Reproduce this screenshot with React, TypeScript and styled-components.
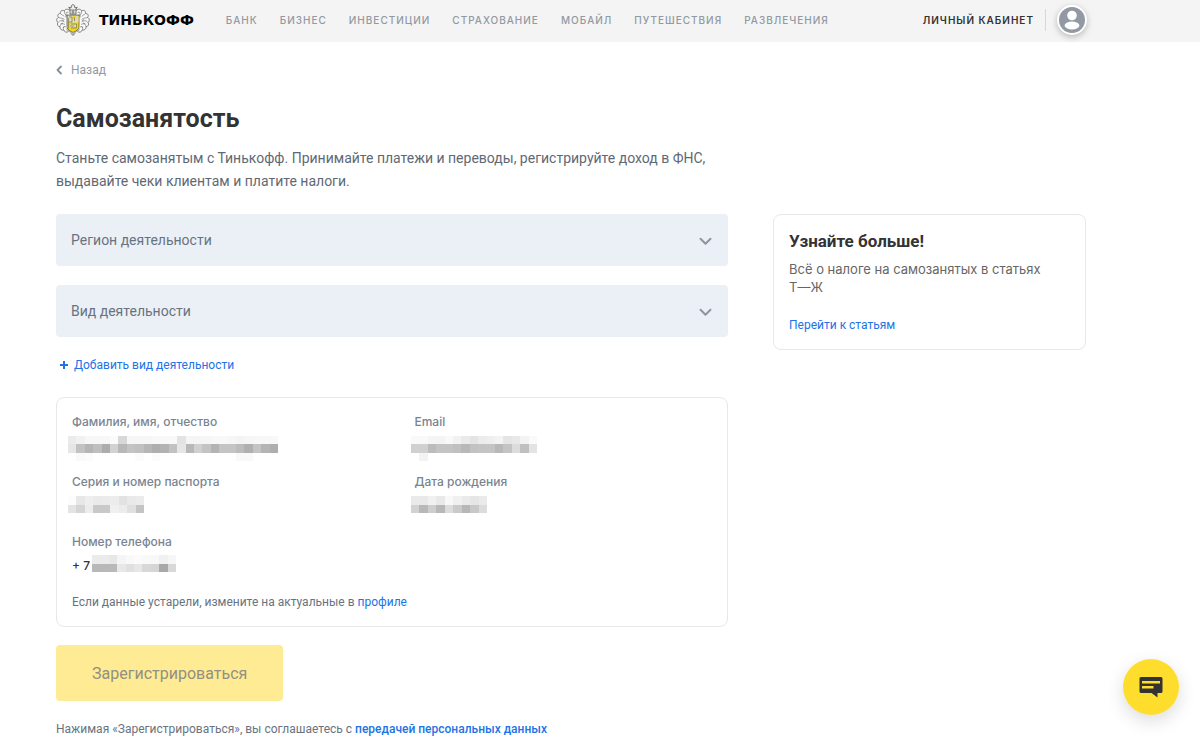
import React from "react";
import styled, { createGlobalStyle } from "styled-components";

const GlobalStyle = createGlobalStyle`
  *, *::before, *::after { box-sizing: border-box; }
  body {
    margin: 0;
    background: #fff;
    color: #333;
    font-family: Roboto, "Liberation Sans", sans-serif;
    font-size: 14px;
  }
  h1, h2, p, dl, dd { margin: 0; }
  a { text-decoration: none; }
`;

const Header = styled.header`
  display: flex;
  align-items: center;
  height: 42px;
  padding: 0 113px 2px 56px;
  background: #f4f4f4;
`;

const Brand = styled.a`
  display: flex;
  align-items: center;
  gap: 9px;
  margin-right: 32px;
  color: #000;
  font: 700 14px/16px "DejaVu Sans", sans-serif;
`;

const Nav = styled.nav`
  display: flex;
  flex: 1;
  gap: 22px;
`;

const NavLink = styled.a<{ $strong?: boolean }>`
  color: ${(p) => (p.$strong ? "#333" : "#9299a2")};
  font: ${(p) => (p.$strong ? 600 : 500)} 10px/12px Inter, sans-serif;
  letter-spacing: 1px;
  white-space: nowrap;
`;

const Divider = styled.span`
  width: 1px;
  height: 22px;
  margin: 0 11px;
  background: #d5d7da;
`;

const Avatar = styled.button`
  display: flex;
  padding: 0;
  border: 2px solid #fff;
  border-radius: 50%;
  background: #9299a2;
  box-shadow: 0 2px 6px rgba(0, 0, 0, 0.25);
`;

const Page = styled.main`
  padding: 20px 114px 4px 56px;
`;

const BackLink = styled.a`
  display: inline-flex;
  align-items: center;
  gap: 8px;
  color: #9299a2;
  font-size: 12px;
  line-height: 16px;
`;

const Title = styled.h1`
  margin-top: 25px;
  font-size: 25px;
  line-height: 32px;
`;

const Lead = styled.p`
  max-width: 672px;
  margin-top: 12px;
  color: #5f6975;
  font-size: 14px;
  line-height: 23px;
`;

const Columns = styled.div`
  display: grid;
  grid-template-columns: minmax(0, 672fr) minmax(0, 313fr);
  align-items: start;
  gap: 45px;
  margin-top: 21px;
`;

const Form = styled.form`
  display: flex;
  flex-direction: column;
  align-items: flex-start;
`;

const SelectField = styled.div`
  display: grid;
  width: 100%;
  align-items: center;
  margin-bottom: 19px;

  & > * { grid-area: 1 / 1; }
  & > svg {
    justify-self: end;
    margin-right: 16px;
    margin-top: 2px;
    pointer-events: none;
  }
`;

const Select = styled.select`
  appearance: none;
  width: 100%;
  height: 52px;
  padding: 0 40px 0 15px;
  border: 0;
  border-radius: 4px;
  background: #ebf0f7;
  color: #697380;
  font: 400 14px/20px Roboto, sans-serif;
`;

const AddButton = styled.button`
  display: flex;
  align-items: center;
  gap: 6px;
  padding: 0 0 0 4px;
  border: 0;
  background: none;
  color: #2173e6;
  font: 400 12px/18px Roboto, sans-serif;
`;

const Card = styled.section`
  width: 100%;
  padding: 15px;
  border: 1px solid #e7e8ea;
  border-radius: 8px;
`;

const DetailsCard = styled(Card)`
  margin: 23px 0 18px;
`;

const Details = styled.dl`
  display: grid;
  grid-template-columns: minmax(0, 343fr) minmax(0, 298fr);
  row-gap: 14px;
`;

const Term = styled.dt`
  color: #7a8490;
  font: 500 12px/18px Inter, sans-serif;
`;

const Value = styled.dd<{ $inset?: number }>`
  display: flex;
  align-items: flex-start;
  height: 28px;
  padding-top: 5px;
  margin-left: ${(p) => -(p.$inset ?? 0)}px;
`;

const Phone = styled(Value)`
  gap: 2px;
  padding-top: 4px;
  color: #333;
  font: 500 12px/22px Inter, sans-serif;
`;

const Note = styled.p<{ $gap: number }>`
  margin-top: ${(p) => p.$gap}px;
  color: #697380;
  font-size: 12px;
  line-height: 18px;
`;

const TextLink = styled.a<{ $medium?: boolean }>`
  color: #2173e6;
  font-size: 12px;
  font-weight: ${(p) => (p.$medium ? 500 : 400)};
  line-height: 18px;
`;

const Submit = styled.button`
  height: 56px;
  padding: 1px 36px 0;
  border: 0;
  border-radius: 4px;
  background: #ffeb94;
  color: #929081;
  font: 400 16px/24px Roboto, sans-serif;
`;

const CardTitle = styled.h2`
  font-size: 17px;
  line-height: 22px;
`;

const CardText = styled.p`
  margin: 8px 0 20px;
  color: #666;
  font: 400 13px/18px Inter, sans-serif;
`;

const NoBreak = styled.span`
  white-space: nowrap;
`;

const ChatButton = styled.button`
  position: fixed;
  right: 21px;
  bottom: 26px;
  display: grid;
  place-items: center;
  width: 56px;
  height: 56px;
  padding: 0;
  border: 0;
  border-radius: 50%;
  background: #ffdd2d;
  box-shadow: 0 6px 18px rgba(0, 0, 0, 0.14);
`;

/* Each row is a run of two-digit grey levels, one per hidden cell. */
function Redacted({ rows }: { rows: string[] }) {
  const cell = 8.4;
  const columns = Math.max(...rows.map((r) => r.length / 2));
  return (
    <svg
      width={Math.round(columns * cell)}
      height={Math.round(rows.length * cell)}
      viewBox={`0 0 ${columns} ${rows.length}`}
      preserveAspectRatio="none"
      shapeRendering="crispEdges"
      aria-label="Скрыто"
    >
      {rows.flatMap((row, y) =>
        (row.match(/../g) ?? []).map((g, x) => (
          <rect key={`${x}-${y}`} x={x} y={y} width="1" height="1" fill={`#${g}${g}${g}`} />
        ))
      )}
    </svg>
  );
}

function Chevron() {
  return (
    <svg width="13" height="9" viewBox="0 0 13 9" fill="none" stroke="#8d95a1" strokeWidth="2" strokeLinecap="round" strokeLinejoin="round">
      <path d="M1.5 1.8 6.5 6.8 11.5 1.8" />
    </svg>
  );
}

const mantle =
  "M14 6.5C11 4.5 9 5 8.5 7 6 5.5 4 7 4.5 9.5 2 9.5 1 11.5 2.5 13.5 .3 14.5 0 17 2 18.5 .8 20.5 1.8 22.5 4 22.8 3.8 25 5.5 26.5 7.8 26 8.5 28.3 11 28.8 12.5 27.5";

function Crest() {
  return (
    <svg width="34" height="32" viewBox="0 0 34 32" fill="none" stroke="#666" strokeWidth=".8" strokeLinejoin="round">
      {[undefined, "matrix(-1 0 0 1 34 0)"].map((transform, i) => (
        <g key={i} transform={transform}>
          <path d={mantle} fill="#fafafa" />
          <path
            d="M12.500 8.500C10 7.300 9.500 9 10.500 10.500M8.500 7C8 9 8.800 10.500 10.800 11.500M4.500 9.500C5.500 11.500 7.500 10.500 8 12.500M2.500 13.500C5 14.500 6 13.500 8.500 15.500M2 18.500C4 16 6 16.500 8.500 18M4 22.800C4 20 6.500 19 9 20.500M7.800 26C6.500 23.500 8 22 10 23M12.500 27.500C10.500 26.500 10.500 25 11.500 24"
            strokeWidth=".7"
            stroke="#777"
          />
          <path d="M5.800 15.800l2 .8M4.500 20l2.500-1M7 24l1.500-2M10 13.500V10.500" strokeWidth=".7" />
        </g>
      ))}
      <path d="M14 10V5.500L12.800 3.200 15 4 15.500 1.500 17 .5 18.500 1.500 19 4 21.200 3.200 20 5.500V10Z" fill="#eee" stroke="#555" />
      <path d="M14 6H20M15.500 8H18.500M17 6V10" stroke="#666" />
      <path d="M11 11H23V22.500C23 25.500 20.500 26.500 17 28.500 13.500 26.500 11 25.500 11 22.500Z" fill="#f5d60f" stroke="#5c5a48" />
      <path d="M12 12H16.500V15H19.500V12H22.500V18.500H12ZM14 20.500H20V23H14Z" fill="#dedbc4" stroke="none" />
      <path d="M12.500 14V24.500M13 13H16V18H13M15 20H20.500V24H15M14 22H18M18.500 13.500V17" stroke="#77735a" strokeWidth=".7" />
      <path d="M12 25.500 17 30.500 22 25.500M15 29.500 17 31.500 19 29.500" stroke="#666" />
    </svg>
  );
}

const sections = ["Банк", "Бизнес", "Инвестиции", "Страхование", "Мобайл", "Путешествия", "Развлечения"];

const people = {
  name: [
    "ebf1f7f7f7fbd8f6f6f6f8f8f9e3f5f5f6f8f8f6f4f6f7f7f8",
    "e6c2b5bfacd2b8c4c0b6aeb2c2e6b8d0c4b4c4c4bcb0c4b4ae",
    "fff9fbfffffffffffcfffcfffffffffffffffffff9f9ffffff",
  ],
  email: ["f9f9f5f4f9f2eae4eceff3e5e8f3fa", "d0d0bcc4c4c0b8c2c4c4b8c4dcc0e3", "fff3ffffffffffffffffffffffffff"],
  passport: ["fce7eeeaebece2e9eb", "e4d5ecc9c9f0ece0c4"],
  birth: ["eae9f1e9f8f0eae5ea", "d2b8ceb8dccab7c8dc"],
  phone: ["ebebe7f5f9fbf9f8f1f6", "b8b8b9e8e0e7d8d5a8d8"],
};

function ChoiceField({ id, label }: { id: string; label: string }) {
  return (
    <SelectField>
      <Select id={id} aria-label={label} defaultValue="">
        <option value="">{label}</option>
      </Select>
      <Chevron />
    </SelectField>
  );
}

export default function App() {
  return (
    <>
      <GlobalStyle />
      <Header>
        <Brand href="#">
          <Crest />
          ТИНЬКОФФ
        </Brand>
        <Nav>
          {sections.map((s) => (
            <NavLink key={s} href="#">{s.toUpperCase()}</NavLink>
          ))}
        </Nav>
        <NavLink href="#" $strong>ЛИЧНЫЙ КАБИНЕТ</NavLink>
        <Divider />
        <Avatar type="button" aria-label="Профиль">
          <svg width="26" height="26" viewBox="0 0 26 26" fill="#fff">
            <circle cx="13" cy="8.500" r="4.800" />
            <ellipse cx="13" cy="18.500" rx="7.400" ry="4" />
          </svg>
        </Avatar>
      </Header>

      <Page>
        <BackLink href="#">
          <svg width="7" height="10" viewBox="0 0 7 10" fill="none" stroke="#858e99" strokeWidth="1.800" strokeLinecap="round" strokeLinejoin="round">
            <path d="M5 1.500 1.500 5 5 8.500" />
          </svg>
          Назад
        </BackLink>
        <Title>Самозанятость</Title>
        <Lead>
          Станьте самозанятым с Тинькофф. Принимайте платежи и переводы, регистрируйте доход в ФНС, выдавайте чеки клиентам и платите налоги.
        </Lead>

        <Columns>
          <Form onSubmit={(e) => e.preventDefault()}>
            <ChoiceField id="region" label="Регион деятельности" />
            <ChoiceField id="activity" label="Вид деятельности" />
            <AddButton type="button">
              <svg width="8" height="8" viewBox="0 0 8 8" stroke="#2173e6" strokeWidth="2">
                <path d="M4 0V8M0 4H8" />
              </svg>
              Добавить вид деятельности
            </AddButton>

            <DetailsCard>
              <Details>
                <div>
                  <Term>Фамилия, имя, отчество</Term>
                  <Value $inset={4}><Redacted rows={people.name} /></Value>
                </div>
                <div>
                  <Term>Email</Term>
                  <Value $inset={3}><Redacted rows={people.email} /></Value>
                </div>
                <div>
                  <Term>Серия и номер паспорта</Term>
                  <Value $inset={4}><Redacted rows={people.passport} /></Value>
                </div>
                <div>
                  <Term>Дата рождения</Term>
                  <Value $inset={3}><Redacted rows={people.birth} /></Value>
                </div>
                <div>
                  <Term>Номер телефона</Term>
                  <Phone>+ 7 <Redacted rows={people.phone} /></Phone>
                </div>
              </Details>
              <Note $gap={14}>
                Если данные устарели, измените на актуальные в <TextLink href="#">профиле</TextLink>
              </Note>
            </DetailsCard>

            <Submit type="submit">Зарегистрироваться</Submit>
            <Note $gap={19}>
              Нажимая «Зарегистрироваться», вы соглашаетесь с <TextLink href="#" $medium>передачей персональных данных</TextLink>
            </Note>
          </Form>

          <Card as="aside">
            <CardTitle>Узнайте больше!</CardTitle>
            <CardText>Всё о налоге на самозанятых в статьях <NoBreak>Т—Ж</NoBreak></CardText>
            <TextLink href="#">Перейти к статьям</TextLink>
          </Card>
        </Columns>
      </Page>

      <ChatButton type="button" aria-label="Чат">
        <svg width="24" height="22" viewBox="0 0 24 22">
          <path d="M2 1H22Q23.500 1 23.500 2.500V15.500Q23.500 17 22 17H18.500V21.500L12.500 17H2Q.5 17 .5 15.500V2.500Q.5 1 2 1Z" fill="#333" />
          <path d="M3 5H21V7.500H3ZM3 10H14.500V12.500H3Z" fill="#ffdd2d" />
        </svg>
      </ChatButton>
    </>
  );
}
